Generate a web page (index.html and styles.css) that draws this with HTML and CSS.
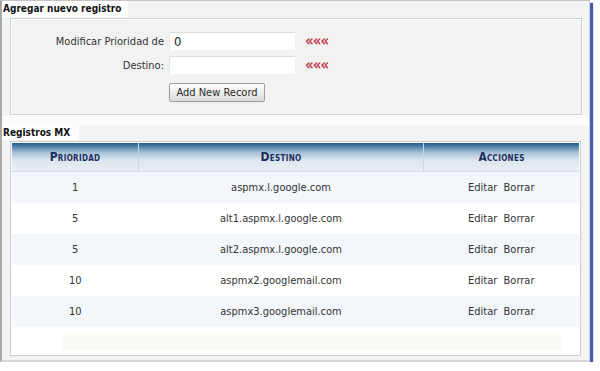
FILE: index.html
```html
<!DOCTYPE html>
<html>
<head>
<meta charset="utf-8">
<link rel="stylesheet" href="styles.css">
</head>
<body>
<div class="frame">
  <div class="title"><span>Agregar nuevo registro</span></div>
  <div class="box">
    <div class="form">
      <label class="lbl">Modificar Prioridad de</label>
      <div class="inp">0</div>
      <span class="req">«««</span>
      <label class="lbl">Destino:</label>
      <div class="inp"></div>
      <span class="req">«««</span>
      <span></span>
      <button class="btn">Add New Record</button>
    </div>
  </div>
  <div class="band"></div>
  <div class="title small"><span>Registros MX</span></div>
  <div class="grid">
    <table>
      <thead>
        <tr><th class="c1">Prioridad</th><th class="c2">Destino</th><th class="c3">Acciones</th></tr>
      </thead>
      <tbody>
        <tr><td>1</td><td>aspmx.l.google.com</td><td>Editar&nbsp; Borrar</td></tr>
        <tr><td>5</td><td>alt1.aspmx.l.google.com</td><td>Editar&nbsp; Borrar</td></tr>
        <tr><td>5</td><td>alt2.aspmx.l.google.com</td><td>Editar&nbsp; Borrar</td></tr>
        <tr><td>10</td><td>aspmx2.googlemail.com</td><td>Editar&nbsp; Borrar</td></tr>
        <tr><td>10</td><td>aspmx3.googlemail.com</td><td>Editar&nbsp; Borrar</td></tr>
      </tbody>
    </table>
    <div class="pager"></div>
  </div>
</div>
</body>
</html>
```
FILE: styles.css
```css
html, body { margin: 0; padding: 0; background: #fff; }
body { font-family: "DejaVu Sans Condensed", "DejaVu Sans", sans-serif; font-size: 11px; color: #333; }
.frame {
  box-sizing: border-box;
  width: 590px; height: 362px;
  background: #f3f3f3;
  border-left: 2px solid #a9a9a9;
  border-top: 1px solid #c4c4c4;
  border-right: 1px solid #d0d0d0;
  border-bottom: 2px solid #d6d6d6;
  box-shadow: 3px 3px 1px #4a5cb2;
}
.title { height: 16px; }
.title span {
  display: inline-block; height: 16px; line-height: 16px;
  background: #fff; padding: 0 7px 0 1px;
  font-weight: bold; color: #111; font-size: 10px;
}
.title.small { height: 14px; }
.title.small span { height: 14px; line-height: 14px; padding-right: 9px; }
.box {
  margin: 1px 0 0 8px;
  width: 572px; height: 97px; box-sizing: border-box;
  border: 1px solid #c6d7cb;
  box-shadow: 1px 1px 0 #fff, inset 1px 1px 0 #fff;
  background: #f2f2f2;
}
.form {
  display: grid;
  grid-template-columns: 153px 126px auto;
  column-gap: 5px; row-gap: 6px;
  padding-top: 13px;
  align-items: center;
}
.lbl { text-align: right; color: #333; }
.inp {
  height: 18px; box-sizing: border-box;
  background: #fff;
  border-top: 1px solid #dcdcdc;
  border-left: 1px solid #e6e6e6;
  padding: 0 4px; line-height: 17px;
  font-size: 13px; color: #222;
}
.req { color: #c23a4c; font-weight: bold; font-size: 15px; line-height: 16px; margin-left: 5px; letter-spacing: -1px; }
.btn {
  justify-self: start; margin-top: 3px;
  width: 96px; height: 19px; padding: 0;
  font-family: inherit; font-size: 11px; color: #2a2a2a;
  border: 1px solid #9c9c9c; border-radius: 2px;
  background: linear-gradient(#fdfdfd, #ebebeb 60%, #dadada);
}
.band { height: 10px; margin-top: 1px; background: #fbfbfb; }
.grid {
  margin: 1px 0 0 8px;
  width: 571px; height: 215px; box-sizing: border-box;
  border: 1px solid #cccccc;
  background: #fff;
  padding: 1px;
}
table { width: 567px; border-collapse: collapse; table-layout: fixed; }
th {
  height: 28px; padding: 0;
  font-variant: small-caps; font-weight: bold; color: #1c2c5e; font-size: 12px; letter-spacing: 0.3px;
  background: linear-gradient(#215a8b 0%, #4f7ea7 12%, #a9c2d8 35%, #dbe5ef 60%, #e9eef4 100%);
  border-bottom: 1px solid #d2dce6;
  border-left: 1px solid #c9d5e0;
}
th.c1 { width: 126px; border-left: none; }
th.c2 { width: 284px; }
td { height: 31px; padding: 0; text-align: center; color: #333; }
tbody tr:nth-child(odd) td { background: #f3f6fb; }
.pager { margin: 6px 0 0 50px; width: 500px; height: 17px; background: #fbfaf4; }
```
